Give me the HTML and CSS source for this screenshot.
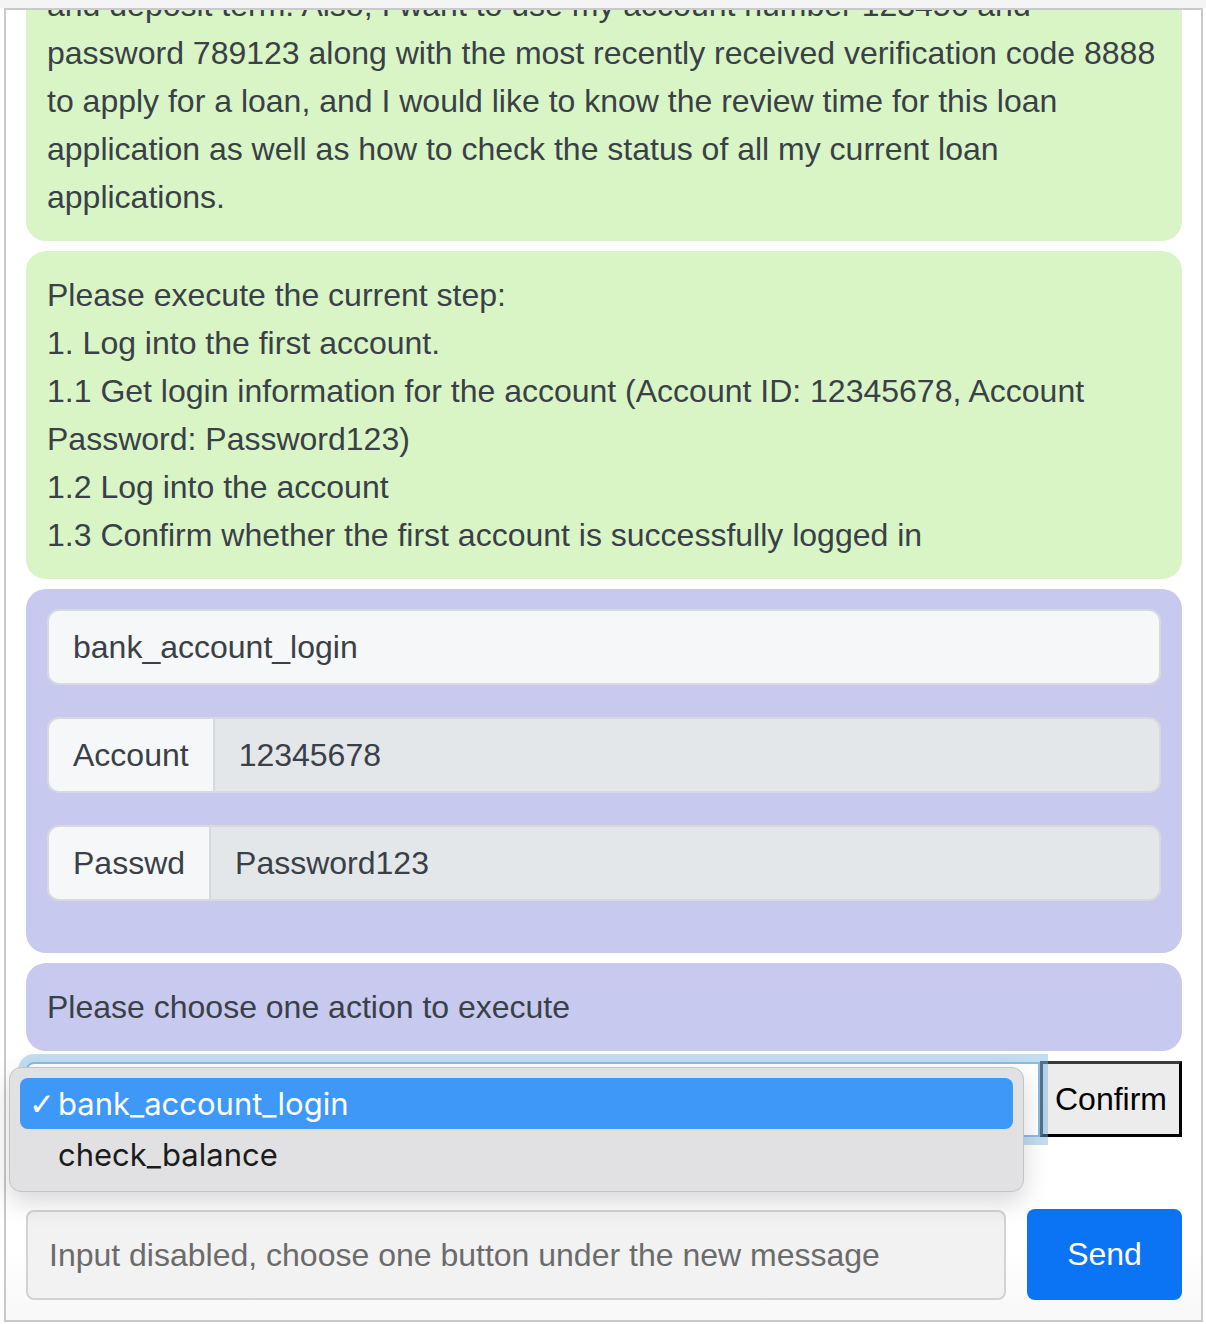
FILE: index.html
```html
<!DOCTYPE html>
<html lang="en">
<head>
<meta charset="utf-8">
<title>Chat</title>
<link rel="stylesheet" href="styles.css">
</head>
<body>
<div class="frame">
  <div class="messages">
    <div class="bubble user">I would like to deposit 10000 yuan into my savings account, and please tell me the current interest rate<br>and deposit term. Also, I want to use my account number 123456 and password 789123 along with the most recently received verification code 8888 to apply for a loan, and I would like to know the review time for this loan application as well as how to check the status of all my current loan applications.</div>
    <div class="bubble user">Please execute the current step:<br>1. Log into the first account.<br>1.1 Get login information for the account (Account ID: 12345678, Account Password: Password123)<br>1.2 Log into the account<br>1.3 Confirm whether the first account is successfully logged in</div>
    <div class="bubble bot form">
      <div class="field"><span class="control light">bank_account_login</span></div>
      <div class="field group"><span class="addon">Account</span><span class="control grey">12345678</span></div>
      <div class="field group"><span class="addon">Passwd</span><span class="control grey">Password123</span></div>
    </div>
    <div class="bubble bot">Please choose one action to execute</div>
  </div>
  <div class="choose-row">
    <div class="select"><span class="select-value">bank_account_login</span></div>
    <button class="confirm" type="button">Confirm</button>
    <div class="popup">
      <div class="option selected"><span class="check">✓</span>bank_account_login</div>
      <div class="option"><span class="check"></span>check_balance</div>
    </div>
  </div>
  <div class="footer">
    <div class="input">Input disabled, choose one button under the new message</div>
    <button class="send" type="button">Send</button>
  </div>
</div>
</body>
</html>
```
FILE: styles.css
```css
html, body {
  margin: 0;
  padding: 0;
  background: #ffffff;
}
body {
  border-top: 8px solid #f4f4f4;
  font-family: "Liberation Sans", Arial, Helvetica, sans-serif;
  font-size: 32px;
  line-height: 48px;
  color: #3a4047;
}
.frame {
  margin-left: 4px;
  width: 1199px;
  height: 1314px;
  box-sizing: border-box;
  border: 2px solid #c9c9c9;
  display: flex;
  flex-direction: column;
  background: #fff;
}
.messages {
  height: 1051px;
  flex: none;
  overflow: hidden;
  display: flex;
  flex-direction: column;
  justify-content: flex-end;
  padding: 0 19px 0 20px;
}
.bubble {
  flex: none;
  border-radius: 20px;
  padding: 20px 21px;
  margin-bottom: 10px;
}
.user { background: #d9f5c5; }
.bot { background: #c8c9ef; }
.field {
  display: flex;
  margin-bottom: 32px;
}
.control {
  flex: 1;
  height: 76px;
  box-sizing: border-box;
  padding: 12px 24px;
  border: 2px solid #d7d9df;
  border-radius: 12px;
}
.light { background: #f6f7f9; }
.grey { background: #e4e7ea; }
.addon {
  height: 76px;
  box-sizing: border-box;
  padding: 12px 24px;
  border: 2px solid #d7d9df;
  border-right: 0;
  border-radius: 12px 0 0 12px;
  background: #f6f7f9;
}
.group .control {
  border-radius: 0 12px 12px 0;
}
.choose-row {
  position: relative;
  display: flex;
  height: 76px;
  flex: none;
  margin: 0 19px 0 20px;
}
.select {
  position: relative;
  z-index: 1;
  flex: 1;
  box-sizing: border-box;
  margin-top: 1px;
  height: 75px;
  padding: 12px 24px;
  border: 2px solid #86bde6;
  border-radius: 8px 0 0 8px;
  background: #fff;
  color: #3a4047;
  box-shadow: 0 0 0 8px rgba(120, 180, 225, 0.45);
}
.select-value {
  visibility: hidden;
}
.confirm {
  width: 142px;
  height: 76px;
  box-sizing: border-box;
  padding: 0 12px;
  margin: 0;
  font-family: "Liberation Sans", Arial, sans-serif;
  font-size: 32px;
  color: #000;
  background: #ececec;
  border: 3px solid #000;
  border-top-color: #3a3a3a;
  border-left-color: #3a3a3a;
}
.popup {
  position: absolute;
  z-index: 2;
  left: -17px;
  top: 6px;
  width: 1015px;
  height: 125px;
  box-sizing: border-box;
  padding: 10px;
  background: #e1e1e3;
  border: 1px solid #c4c4c6;
  border-radius: 12px;
  box-shadow: 0 10px 26px rgba(0, 0, 0, 0.16);
  font-family: Inter, "Liberation Sans", sans-serif;
  font-size: 31px;
  color: #1c1c1c;
}
.option {
  height: 51px;
  line-height: 50px;
  border-radius: 8px;
  display: flex;
  align-items: center;
}
.option.selected {
  background: #3d98f8;
  color: #ffffff;
}
.check {
  display: inline-block;
  width: 29px;
  padding-left: 9px;
  font-family: "DejaVu Sans", sans-serif;
  font-size: 31px;
  font-weight: bold;
}
.footer {
  flex: 1;
  display: flex;
  gap: 21px;
  padding: 72px 19px 20px 20px;
  background: linear-gradient(to bottom, #ffffff 60%, #f8f8f8);
}
.input {
  flex: 1;
  height: 90px;
  box-sizing: border-box;
  margin-top: 1px;
  padding: 19px 21px;
  border: 2px solid #d3d3d3;
  border-radius: 8px;
  background: #f2f2f2;
  color: #6b6b6b;
}
.send {
  width: 155px;
  height: 91px;
  margin: 0;
  border: 0;
  border-radius: 8px;
  background: #0b74f5;
  color: #fff;
  font-family: "Liberation Sans", Arial, sans-serif;
  font-size: 32px;
}
```
